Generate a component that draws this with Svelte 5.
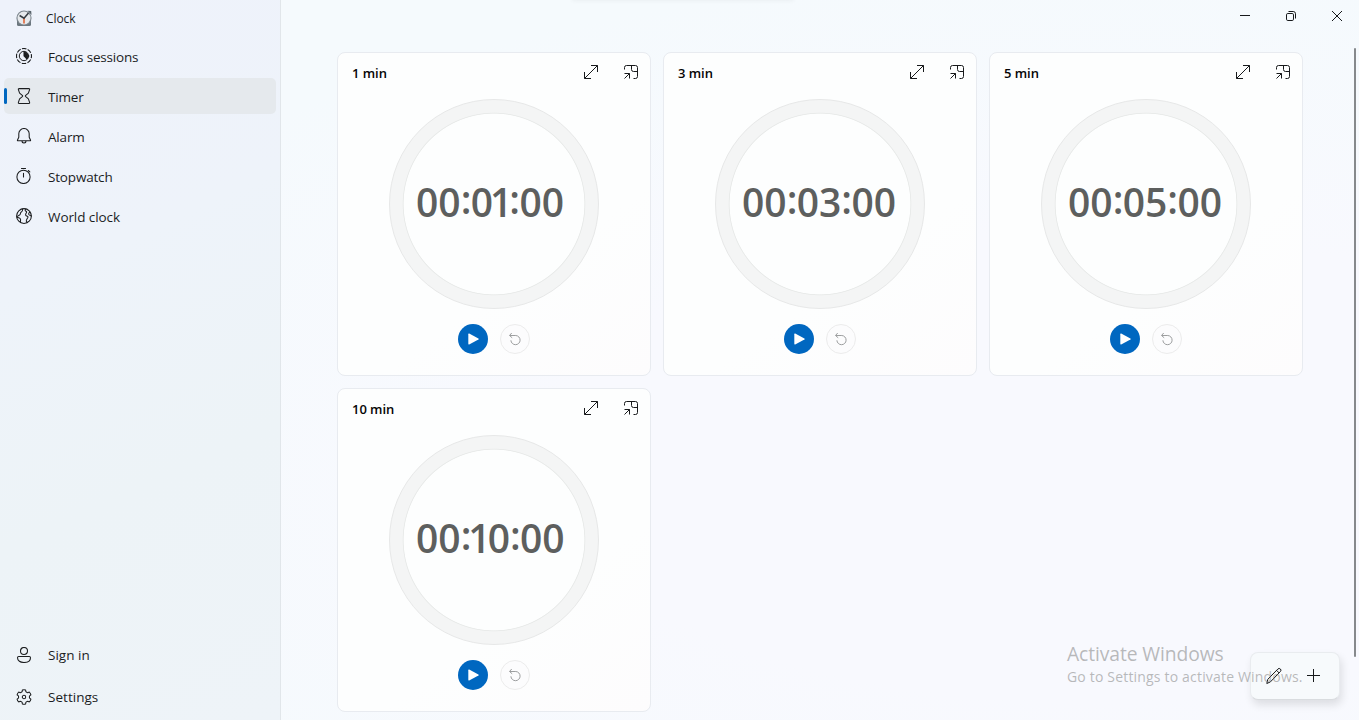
<script>
  const nav = [
    { id: 'focus', label: 'Focus sessions' },
    { id: 'timer', label: 'Timer' },
    { id: 'alarm', label: 'Alarm' },
    { id: 'stopwatch', label: 'Stopwatch' },
    { id: 'world', label: 'World clock' }
  ];
  const account = [
    { id: 'user', label: 'Sign in' },
    { id: 'settings', label: 'Settings' }
  ];
  const timers = [
    { name: '1 min', time: '00:01:00' },
    { name: '3 min', time: '00:03:00' },
    { name: '5 min', time: '00:05:00' },
    { name: '10 min', time: '00:10:00' }
  ];
  let selected = $state('timer');

  const gear = Array.from({ length: 6 }, (_, i) => {
    const p = (r, deg) => {
      const a = ((i * 60 + deg - 90) * Math.PI) / 180;
      return `${(8 + r * Math.cos(a)).toFixed(2)} ${(8 + r * Math.sin(a)).toFixed(2)}`;
    };
    return `${i ? 'L' : 'M'}${p(7.2, -13)} Q${p(7.6, 0)} ${p(7.2, 13)} L${p(5.7, 19)} Q${p(5.2, 30)} ${p(5.7, 41)}`;
  }).join(' ') + 'Z';
</script>

{#snippet icon(id)}
  <svg class="icon" width="16" height="16" viewBox="0 0 16 16" fill="none" stroke="#1b1d1f" stroke-width="1.05" stroke-linecap="round" stroke-linejoin="round">
    {#if id === 'focus'}
      <circle cx="8" cy="8" r="7.5" stroke-width="1.1" stroke-linecap="butt" stroke-dasharray="4.5 1.39" stroke-dashoffset="2.3" />
      <circle cx="8" cy="8" r="4.7" stroke-width="1" />
      <path d="M8 4a4 4 0 0 1 2.8 6.8L8 8Z" fill="#1b1d1f" />
    {:else if id === 'timer'}
      <path d="M3.1.6h9.8q1 0 .7 1L12.4 5.1 9.7 7.3q-.8.7 0 1.4l2.7 2.2 1.2 3.5q.3 1-.7 1H3.1q-1 0-.7-1l1.2-3.5 2.7-2.2q.8-.7 0-1.4L3.6 5.1 2.4 1.6q-.3-1 .7-1Z" />
    {:else if id === 'alarm'}
      <path d="M8 .5a5.2 5.2 0 0 0-5.2 5.2v3.6L1.5 12q-.3.8.5.8h12q.8 0 .5-.8l-1.3-2.7V5.7A5.2 5.2 0 0 0 8 .5ZM6 13a2 2 0 0 0 4 0" />
    {:else if id === 'stopwatch'}
      <circle cx="7.5" cy="8.9" r="6.6" /><path d="M5.5.5h4M7.5 5.2v3.7M12.3 2.5l1.5 1.4" />
    {:else if id === 'world'}
      <circle cx="8" cy="8" r="7.4" />
      <path d="M6.6 1c.2 1.7-.1 2.6-1.5 3.3-1 .5-.3 1.7-1.2 2.4L1 8.6M1 9.2l2.4.8q1.2.6 1.2 1.7l-.2 2.6M9.7 1c-.9.9-.7 2 .3 2.3 1.5.5-.2 2.1-.4 3.2-.2 1.2.9 1.5 1.8 1.8 1.2.4.2 1.7-.3 2.5-.4.8-.9 1.4-.8 2.3l.8 1.5M15.2 8l-2-1.1q-.9-.6-.4-1.7L14 4.1" />
    {:else if id === 'user'}
      <circle cx="8" cy="4" r="3.5" /><path d="M2.7 9.5h10.6q1.2 0 1.2 1.2c0 3.1-2.8 4.8-6.5 4.8s-6.5-1.7-6.5-4.8q0-1.2 1.2-1.2Z" />
    {:else}
      <path d={gear} /><circle cx="8" cy="8" r="1.7" />
    {/if}
  </svg>
{/snippet}

<div class="window">
  <aside>
    <div class="brand">
      <svg width="16" height="17" viewBox="0 0 16 17">
        <path d="M1 8.5 15 8v6.4q0 1.5-1.5 1.5h-11Q1 15.9 1 14.4Z" fill="#6c777f" />
        <circle cx="8" cy="8" r="7.6" fill="#7b858d" />
        <path d="m11.5.8 3.7.1.3 4.2Z" fill="#59636b" />
        <circle cx="8" cy="8" r="6.5" fill="#e6e9ec" />
        <path d="M8 8v5.5" stroke="#e1744d" stroke-width="1.8" />
        <path d="m3.6 5.5 4.4 2.7L12.5 3" stroke="#343a40" stroke-width="1.5" fill="none" />
      </svg>
      <span>Clock</span>
    </div>
    <nav>
      {#each nav as item}
        <button class="item {item.id}" class:selected={selected === item.id} onclick={() => (selected = item.id)}>
          {@render icon(item.id)}<span>{item.label}</span>
        </button>
      {/each}
    </nav>
    <div class="account">
      {#each account as item}
        <button class="item {item.id}">{@render icon(item.id)}<span>{item.label}</span></button>
      {/each}
    </div>
  </aside>
  <main>
    <header>
      <i class="edge"></i>
      <svg width="46" height="32" viewBox="0 0 46 32"><path d="M18 15.5h10" /></svg>
      <svg width="46" height="32" viewBox="0 0 46 32"><rect x="18.5" y="13.5" width="7" height="7" rx="1.3" /><path d="M20.5 11.5h4.7q2.3 0 2.3 2.3v4.7" /></svg>
      <svg width="46" height="32" viewBox="0 0 46 32"><path d="m18 11 10 10M28 11 18 21" /></svg>
    </header>
    <section class="cards">
      {#each timers as timer}
        <article>
          <div class="top">
            <h2>{timer.name}</h2>
            <svg width="16" height="16" viewBox="0 0 16 16"><path d="M1.5 8v6.5H8M8 1.5h6.5V8M1.5 14.5l13-13" /></svg>
            <svg class="mini" width="16" height="16" viewBox="0 0 16 16"><path d="M1.5 5.5v-2q0-2 2-2h9q2 0 2 2v9q0 2-2 2h-2M8.5 1.5v4q0 2 2 2h4M1.5 9.5h5v5M6.5 9.5l-5 5" /></svg>
          </div>
          <div class="dial">
            <div class="time">{#each timer.time as char, i}<span class:colon={char === ':'} class:tight={char === '1' || timer.time[i + 1] === '1'}>{char}</span>{/each}</div>
          </div>
          <div class="controls">
            <button class="play" aria-label="Start"><svg width="30" height="30" viewBox="0 0 30 30"><path d="M10.3 10.2v9.6q0 1 .9.6l9.2-4.8q.9-.6 0-1.1l-9.2-4.9q-.9-.4-.9.6Z" /></svg></button>
            <button class="reset" aria-label="Reset"><svg width="28" height="28" viewBox="0 0 28 28"><path d="M10.7 8 8.5 10.5l2.7 2.3M8.8 10.5h6a4.6 4.6 0 1 1-4.9 4.8" /></svg></button>
          </div>
        </article>
      {/each}
    </section>
  </main>
  <i class="scroll"></i>
  <div class="commands">
    <svg width="16" height="18" viewBox="0 0 16 18"><path d="m.8 16.5 1-4.2L12 1.9q1.2-1 2.4.1t.1 2.4L4.4 14.9.8 16.5ZM10.5 3.3l2.7 2.7" /></svg>
    <svg width="14" height="14" viewBox="0 0 14 14"><path d="M7.5 0v13M1 6.5h13" /></svg>
  </div>
  <div class="watermark"><div>Activate Windows</div><p>Go to Settings to activate Windows.</p></div>
</div>

<style>
  :global(body) { margin: 0; overflow: hidden; }
  * { box-sizing: border-box; }
  button { border: 0; background: none; padding: 0; font: inherit; color: inherit; }
  svg { display: block; flex: none; }
  .window { position: relative; display: flex; width: 1359px; height: 720px; overflow: hidden; font-family: 'Open Sans', 'Noto Sans', sans-serif; color: #1b1d1f; background: radial-gradient(ellipse at 80% 65%, #f8f9fe 0%, #f8f9fe 35%, #f5fafd 75%); }
  aside { display: flex; flex-direction: column; width: 281px; border-right: 1px solid #e1e6ea; background: linear-gradient(155deg, #eef2fb 0%, #eef3fa 35%, #edf3f7 65%, #eef3f8 100%); }
  .brand { display: flex; align-items: center; gap: 14px; height: 36px; padding-left: 16px; font-size: 12px; letter-spacing: -.1px; }
  .brand span { padding-top: 1px; }
  nav { display: flex; flex-direction: column; gap: 4px; padding: 2px 4px 0; }
  .item { position: relative; display: flex; align-items: center; gap: 16px; height: 36px; padding-left: 12px; border-radius: 5px; font-size: 13.5px; letter-spacing: -.18px; text-align: left; }
  .item span { padding-top: 2px; line-height: 18px; }
  .world { letter-spacing: -.08px; }
  .selected { background: #e5e9ed; }
  .selected::before { content: ''; position: absolute; left: 0; top: 10px; width: 3px; height: 16px; border-radius: 2px; background: #0067c0; }
  .account { display: flex; flex-direction: column; gap: 6px; margin-top: auto; padding: 0 4px 5px; }
  .account .item { letter-spacing: .03px; }
  .account span { padding: 0 0 1px; }
  main { flex: 1; }
  header { position: relative; display: flex; justify-content: flex-end; height: 52px; }
  header svg { position: relative; left: 1px; fill: none; stroke: #17191b; stroke-width: 1; }
  .edge { position: absolute; left: 291px; top: -7px; width: 222px; height: 7px; box-shadow: 0 1px 4px #0000000c; }
  .cards { display: grid; grid-template-columns: repeat(3, 314px); gap: 12px; padding-left: 56px; }
  article { height: 324px; border: 1px solid #e8ebf0; border-radius: 8px; background: linear-gradient(145deg, #fdfefe 0%, #fdfefe 65%, #fdfcfd 100%); }
  .top { display: flex; align-items: center; height: 37px; padding: 0 11px 0 14px; }
  h2 { flex: 1; margin: 2px 0 0; font-size: 13px; line-height: 18px; font-weight: 600; letter-spacing: -.05px; color: #050505; }
  .top svg { fill: none; stroke: #17191b; stroke-width: 1; }
  .top .mini { margin-left: 24px; }
  .dial { display: flex; align-items: center; width: 210px; height: 210px; margin: 9px 0 0 51px; padding: 0 0 5px 26px; border: 1px solid #e7e8e8; border-radius: 50%; background: radial-gradient(circle, #fdfefe 0 90px, #e9ebea 90.7px 91px, #f4f5f5 91.7px); }
  .time { font-size: 39px; line-height: 50px; font-weight: 600; color: #5d5f5e; white-space: nowrap; }
  .time .colon { position: relative; top: -3px; letter-spacing: -.6px; }
  .time .tight { letter-spacing: -3px; }
  .controls { display: flex; justify-content: center; gap: 12px; margin-top: 15px; }
  .controls button { width: 30px; height: 30px; border-radius: 50%; }
  .play { background: #0067c0; }
  .play path { fill: #fff; }
  .controls .reset { border: 1px solid #ececec; background: #fcfcfd; }
  .reset path { fill: none; stroke: #9c9e9f; stroke-width: 1; }
  .scroll { position: absolute; left: 1354px; top: 48px; width: 2px; height: 609px; border-radius: 1px; background: #86898c; }
  .commands { position: absolute; left: 1250px; top: 652px; width: 90px; height: 48px; display: flex; align-items: center; gap: 24px; padding-left: 15px; border: 1px solid #e9ecef; border-bottom-color: #d9dcdf; border-radius: 8px; background: #f7fafc; box-shadow: 2px 5px 8px #0000001c; }
  .commands svg { fill: none; stroke: #17191b; stroke-width: 1; }
  .watermark { position: absolute; left: 1067px; top: 641px; color: #7777777f; white-space: nowrap; pointer-events: none; }
  .watermark div { font-size: 19.3px; line-height: 25px; letter-spacing: -.1px; }
  .watermark p { margin: 0; font-size: 14px; line-height: 21px; letter-spacing: .18px; }
</style>
